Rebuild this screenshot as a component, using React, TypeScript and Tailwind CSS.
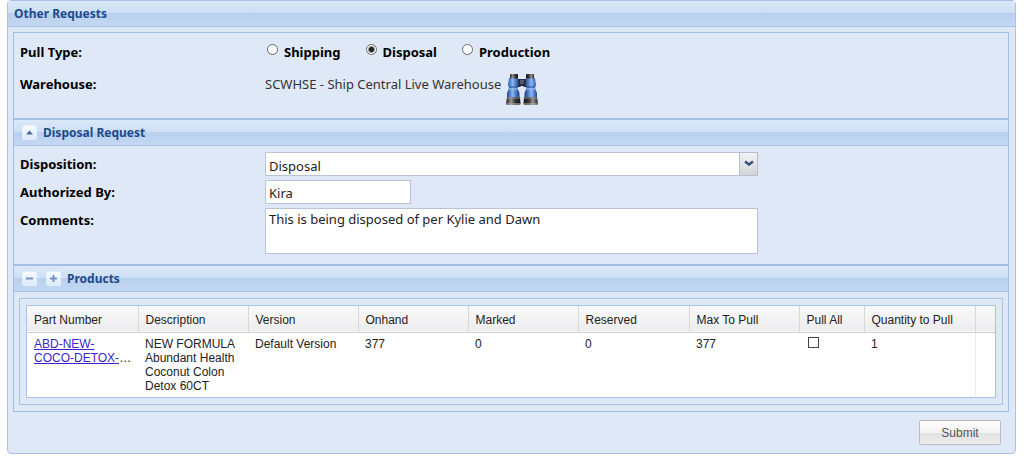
import type { ReactNode } from 'react';

const pullTypes = ['Shipping', 'Disposal', 'Production'];

const columns = [
  { title: 'Part Number', width: 'w-[111px]' },
  { title: 'Description', width: 'w-[110px]' },
  { title: 'Version', width: 'w-[110px]' },
  { title: 'Onhand', width: 'w-[110px]' },
  { title: 'Marked', width: 'w-[110px]' },
  { title: 'Reserved', width: 'w-[111px]' },
  { title: 'Max To Pull', width: 'w-[110px]' },
  { title: 'Pull All', width: 'w-[65px]' },
  { title: 'Quantity to Pull', width: 'w-[111px]' },
];

const products = [
  {
    partNumber: 'ABD-NEW-COCO-DETOX-',
    description: 'NEW FORMULA Abundant Health Coconut Colon Detox 60CT',
    version: 'Default Version',
    onhand: 377,
    marked: 0,
    reserved: 0,
    maxToPull: 377,
    quantity: 1,
  },
];

const labelClass = 'w-[245px] shrink-0 text-[13px] leading-5 font-bold text-black';
const fieldClass = 'border border-[#b9c4d6] bg-white px-[3px] text-[13px] text-[#222] outline-none';

function PanelHeader({ children }: { children: ReactNode }) {
  return (
    <div className="flex h-[26px] items-center border-b border-[#a9c2e3] bg-[linear-gradient(#dbe9f8_0%,#cddff3_46%,#b8cfee_50%,#c4d8f2_100%)] text-[12px] font-bold text-[#1f4a8c]">
      {children}
    </div>
  );
}

function ToolButton({ label, children }: { label: string; children: ReactNode }) {
  return (
    <button
      type="button"
      aria-label={label}
      className="flex size-[15px] items-center justify-center rounded-xs border border-[#e4effb] bg-linear-to-b from-[#f8fbff] to-[#dceafa]"
    >
      <svg viewBox="0 0 9 9" className="size-[9px]">
        {children}
      </svg>
    </button>
  );
}

function Barrel() {
  return (
    <>
      <path d="M3 4h9l.5 7-1 3 2 5v4H1v-4l2-5-1-3z" fill="url(#barrel)" />
      <path d="M3 13h9" stroke="#2a4f97" strokeWidth="1" />
      <path d="M3 15h9" stroke="#9dc0f2" strokeWidth="1" />
      <rect x="4" y="0" width="8" height="4.5" rx="1" fill="url(#rubber)" />
      <path d="M1 23h13l.5 7-1 1H1l-1-1z" fill="url(#rubber)" />
      <path d="M1 24h13" stroke="#8d8f96" strokeWidth="1" />
      <path d="M.5 30h13.5" stroke="#bfb9ac" strokeWidth="1" />
    </>
  );
}

function Binoculars() {
  return (
    <svg viewBox="0 0 32 31" className="h-[31px] w-8">
      <defs>
        <linearGradient id="barrel">
          <stop offset="0" stopColor="#24458a" />
          <stop offset="0.25" stopColor="#5488d4" />
          <stop offset="0.45" stopColor="#8db6f2" />
          <stop offset="0.75" stopColor="#4373c2" />
          <stop offset="1" stopColor="#1d3a75" />
        </linearGradient>
        <linearGradient id="rubber">
          <stop offset="0" stopColor="#1c1d21" />
          <stop offset="0.35" stopColor="#9a9792" />
          <stop offset="0.65" stopColor="#34353a" />
          <stop offset="1" stopColor="#16171b" />
        </linearGradient>
      </defs>
      <path d="M11 5h10v8h-3l-1-1h-2l-1 1h-3z" fill="#252b38" />
      <path d="M14 6h4v4h-4z" fill="#515b6e" />
      <Barrel />
      <g transform="matrix(-1 0 0 1 32 0)">
        <Barrel />
      </g>
    </svg>
  );
}

function PullTypePanel() {
  return (
    <section className="flex h-[87px] flex-col border border-[#a3bfe2] px-[6px] pt-[9px]">
      <fieldset className="flex h-5 items-start">
        <legend className={`float-left ${labelClass}`}>Pull Type:</legend>
        <div className="flex gap-[23px]">
          {pullTypes.map((type) => (
            <label key={type} className="flex items-center gap-[6px] text-[13px] leading-5 font-bold text-black">
              <input
                type="radio"
                name="pullType"
                defaultChecked={type === 'Disposal'}
                className="mb-[5px] ml-[2px] size-[11px] appearance-none rounded-full border border-[#666] bg-white checked:bg-[radial-gradient(#222_0_2px,#fff_4px)]"
              />
              {type}
            </label>
          ))}
        </div>
      </fieldset>
      <div className="mt-[12px] flex items-start">
        <span className={labelClass}>Warehouse:</span>
        <span className="text-[13px] leading-5 text-[#333]">SCWHSE - Ship Central Live Warehouse</span>
        <button type="button" aria-label="Find warehouse" className="ml-[5px]">
          <Binoculars />
        </button>
      </div>
    </section>
  );
}

function DisposalPanel() {
  return (
    <section className="border border-[#a3bfe2]">
      <PanelHeader>
        <div className="flex items-center gap-[6px] pl-2">
          <ToolButton label="Collapse">
            <path d="M1 6.5 4.5 2.5 8 6.5z" fill="#49699c" />
          </ToolButton>
          <h2>Disposal Request</h2>
        </div>
      </PanelHeader>
      <div className="flex flex-col gap-1 px-[6px] pt-[6px] pb-[10px]">
        <div className="flex">
          <label htmlFor="disposition" className={`pt-[2px] ${labelClass}`}>Disposition:</label>
          <div className="relative w-full max-w-[493px]">
            <select id="disposition" className={`block h-6 w-full appearance-none pt-[4px] ${fieldClass}`}>
              <option>Disposal</option>
            </select>
            <span className="pointer-events-none absolute top-0 right-0 flex h-6 w-[19px] justify-center border border-[#b5bfd0] bg-linear-to-b from-[#f2f3f5] to-[#d3d4d8] pt-[7px]">
              <svg viewBox="0 0 10 7" className="h-[7px] w-[10px]">
                <path d="M1 1.5 5 4.5 9 1.5" fill="none" stroke="#354e7c" strokeWidth="2.4" />
              </svg>
            </span>
          </div>
        </div>
        <div className="flex">
          <label htmlFor="authorizedBy" className={`pt-[2px] ${labelClass}`}>Authorized By:</label>
          <input id="authorizedBy" defaultValue="Kira" className={`h-6 w-[146px] pt-[2px] ${fieldClass}`} />
        </div>
        <div className="flex">
          <label htmlFor="comments" className={`pt-[2px] ${labelClass}`}>Comments:</label>
          <textarea
            id="comments"
            defaultValue="This is being disposed of per Kylie and Dawn"
            className={`h-[46px] w-full max-w-[493px] resize-none leading-5 ${fieldClass}`}
          />
        </div>
      </div>
    </section>
  );
}

function ProductsPanel() {
  return (
    <section className="border border-[#a3bfe2]">
      <PanelHeader>
        <div className="flex items-center pl-2">
          <div className="flex gap-[9px] pr-[6px]">
            <ToolButton label="Remove product">
              <path d="M1 4.5h7" stroke="#7593bd" strokeWidth="2" />
            </ToolButton>
            <ToolButton label="Add product">
              <path d="M1 4.5h7M4.5 1v7" stroke="#7593bd" strokeWidth="2" />
            </ToolButton>
          </div>
          <h2>Products</h2>
        </div>
      </PanelHeader>
      <div className="px-[5px] py-[6px]">
        <div className="border border-[#a9c2e6] p-[6px]">
          <div className="border border-[#a9c2e6] bg-white">
            <table className="w-full table-fixed border-collapse text-left font-['Liberation_Sans',Arial,sans-serif] text-[12px] leading-[14px] text-[#222]">
              <thead>
                <tr className="h-[26px] border-b border-[#d0d0d0] bg-linear-to-b from-[#f9f9f9] to-[#ededef]">
                  {columns.map((column) => (
                    <th key={column.title} className={`border-r border-[#d8d8d8] pt-[2px] pl-[7px] font-normal whitespace-nowrap ${column.width}`}>
                      {column.title}
                    </th>
                  ))}
                  <td />
                </tr>
              </thead>
              <tbody>
                {products.map((product) => (
                  <tr key={product.partNumber} className="h-[65px] align-top *:pt-1 *:pl-[7px]">
                    <td className="pr-1">
                      <a href="#part" className="text-[#3b24cc] underline">
                        {product.partNumber.slice(0, 8)}
                        <br />
                        {product.partNumber.slice(8)}
                      </a>
                      …
                    </td>
                    <td className="pr-2">{product.description}</td>
                    <td>{product.version}</td>
                    <td>{product.onhand}</td>
                    <td>{product.marked}</td>
                    <td>{product.reserved}</td>
                    <td>{product.maxToPull}</td>
                    <td>
                      <input
                        type="checkbox"
                        aria-label="Pull all"
                        className="ml-[2px] block size-[11px] appearance-none border border-[#444] bg-white checked:bg-[#444]"
                      />
                    </td>
                    <td className="border-r border-[#ededed]">{product.quantity}</td>
                    <td />
                  </tr>
                ))}
              </tbody>
            </table>
          </div>
        </div>
      </div>
    </section>
  );
}

export default function App() {
  return (
    <main className="bg-white pr-[8px] pl-[7px] font-['Noto_Sans',Tahoma,sans-serif]">
      <form
        onSubmit={(event) => event.preventDefault()}
        className="rounded-sm border border-[#a9c2e6] bg-[#dfe8f6]"
      >
        <PanelHeader>
          <h1 className="pl-[6px]">Other Requests</h1>
        </PanelHeader>
        <div className="pt-[5px] pr-[6px] pl-[5px]">
          <PullTypePanel />
          <DisposalPanel />
          <ProductsPanel />
        </div>
        <div className="flex justify-end px-[14px] pt-2 pb-2">
          <button
            type="submit"
            className="h-[25px] w-[82px] rounded-xs border border-[#bbb] bg-[linear-gradient(#fff_0%,#f3f3f3_50%,#e2e2e2_55%,#ededed_100%)] font-['Liberation_Sans',Arial,sans-serif] text-[12px] text-[#555]"
          >
            Submit
          </button>
        </div>
      </form>
    </main>
  );
}
